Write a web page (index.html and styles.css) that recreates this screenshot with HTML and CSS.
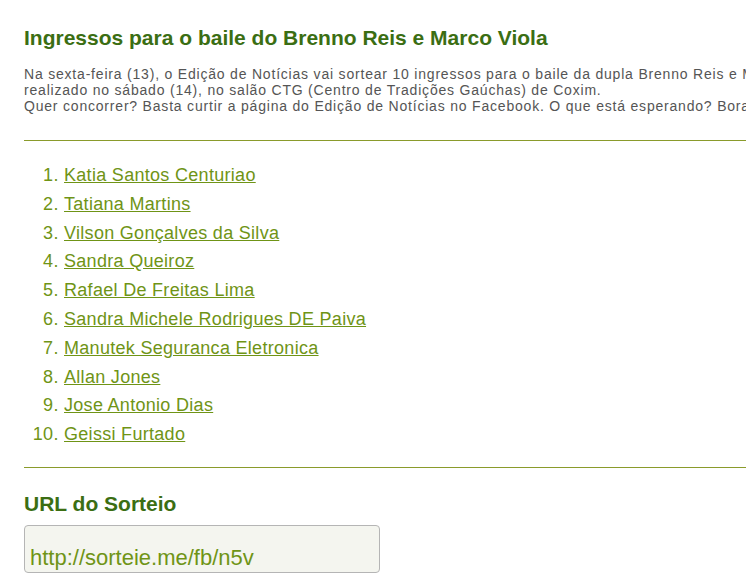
FILE: index.html
```html
<!DOCTYPE html>
<html lang="pt-BR">
<head>
    <meta charset="utf-8">
    <title>Resultado do Sorteio</title>
    <link rel="stylesheet" href="styles.css">
</head>
<body>
    <div class="container">
        <h1 class="title">Ingressos para o baile do Brenno Reis e Marco Viola</h1>
        <p class="description">Na sexta-feira (13), o Edição de Notícias vai sortear 10 ingressos para o baile da dupla Brenno Reis e Marco Viola, que será<br>realizado no sábado (14), no salão CTG (Centro de Tradições Gaúchas) de Coxim.<br>Quer concorrer? Basta curtir a página do Edição de Notícias no Facebook. O que está esperando? Bora lá!</p>

        <hr class="divider">

        <ol class="winners">
            <li><a href="#">Katia Santos Centuriao</a></li>
            <li><a href="#">Tatiana Martins</a></li>
            <li><a href="#">Vilson Gonçalves da Silva</a></li>
            <li><a href="#">Sandra Queiroz</a></li>
            <li><a href="#">Rafael De Freitas Lima</a></li>
            <li><a href="#">Sandra Michele Rodrigues DE Paiva</a></li>
            <li><a href="#">Manutek Seguranca Eletronica</a></li>
            <li><a href="#">Allan Jones</a></li>
            <li><a href="#">Jose Antonio Dias</a></li>
            <li><a href="#">Geissi Furtado</a></li>
        </ol>

        <hr class="divider">

        <h2 class="subtitle">URL do Sorteio</h2>
        <div class="url-box">http://sorteie.me/fb/n5v</div>
    </div>
</body>
</html>
```

FILE: styles.css
```css
body {
    font-family: Arial, "Liberation Sans", sans-serif;
    background-color: #fff;
    margin: 0;
    padding: 0;
}

.container {
    width: 722px;
    margin-left: 24px;
    padding-top: 26px;
    overflow: hidden;
}

.title {
    font-size: 21px;
    font-weight: bold;
    color: #3b6e13;
    margin: 0 0 16px 0;
    line-height: 24px;
    white-space: nowrap;
}

.description {
    font-size: 14px;
    line-height: 16px;
    letter-spacing: 0.8px;
    color: #555;
    margin: 0;
    white-space: nowrap;
}

.divider {
    border: none;
    border-top: 1px solid #8a9b2b;
    margin: 26px 0 0 0;
    height: 0;
}

.winners {
    margin: 20px 0 18px 0;
    padding-left: 40px;
    font-size: 18px;
    line-height: 28.8px;
    letter-spacing: 0.3px;
    color: #6f9416;
}

.winners a {
    color: #6f9416;
    text-decoration: underline;
}

.winners + .divider {
    margin-top: 0;
}

.subtitle {
    font-size: 21px;
    font-weight: bold;
    color: #3b6e13;
    margin: 24px 0 9px 0;
    line-height: 24px;
}

.url-box {
    width: 349px;
    height: 44px;
    background-color: #f4f5ef;
    border: 1px solid #b5b5b5;
    border-radius: 4px;
    font-size: 22px;
    line-height: 24px;
    color: #6f9416;
    padding: 0 0 2px 5px;
    display: flex;
    align-items: flex-end;
}
```
